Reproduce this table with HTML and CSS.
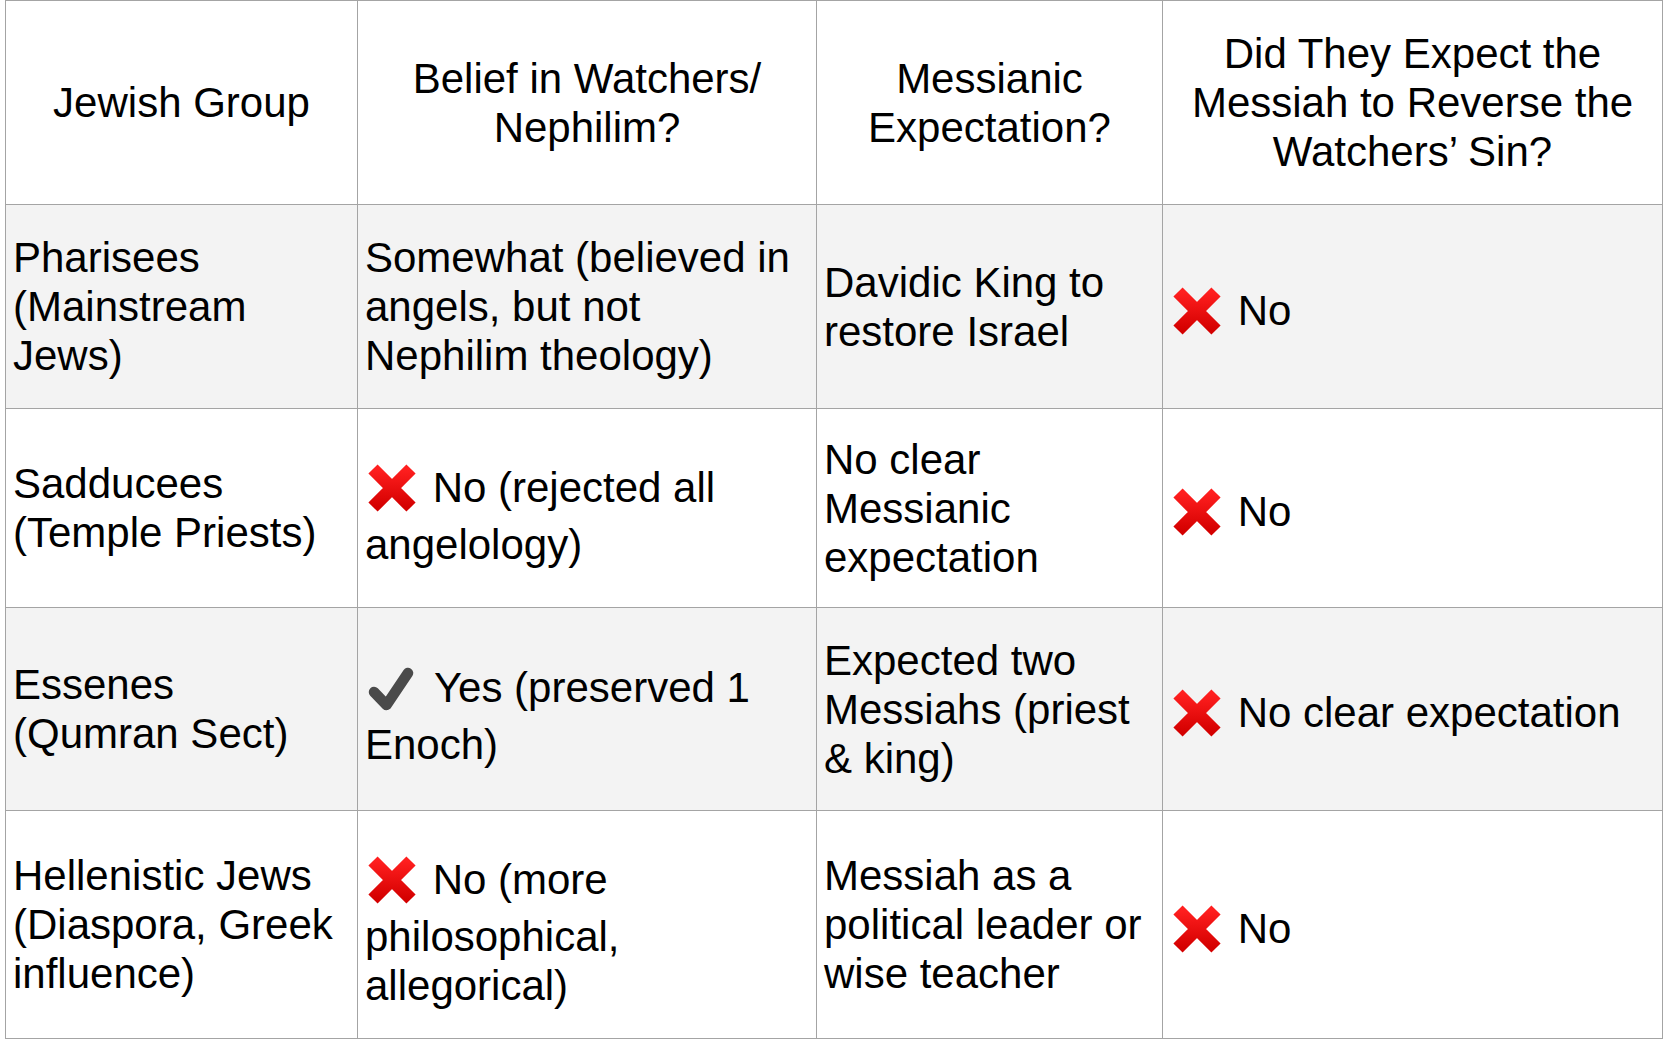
FILE: index.html
```html
<!DOCTYPE html>
<html lang="en">
<head>
<meta charset="utf-8">
<title>Jewish Groups and the Watchers</title>
<link rel="stylesheet" href="styles.css">
</head>
<body>
<svg width="0" height="0" class="defs" aria-hidden="true">
  <defs>
    <linearGradient id="redgrad" x1="0" y1="0" x2="0" y2="1">
      <stop offset="0" stop-color="#ff1f1f"/>
      <stop offset="1" stop-color="#d40000"/>
    </linearGradient>
    <symbol id="cross" viewBox="0 0 52 52">
      <path d="M7 7 L45 45 M45 7 L7 45" stroke="url(#redgrad)" stroke-width="13" stroke-linecap="butt" fill="none"/>
    </symbol>
    <symbol id="check" viewBox="0 0 47 46">
      <path d="M7 26 L19.5 39 L41 7" stroke="#4a4a4a" stroke-width="10.5" stroke-linecap="round" stroke-linejoin="round" fill="none"/>
    </symbol>
  </defs>
</svg>
<table class="grid">
  <colgroup>
    <col class="c1"><col class="c2"><col class="c3"><col class="c4">
  </colgroup>
  <thead>
    <tr class="r-head">
      <th>Jewish Group</th>
      <th>Belief in Watchers/<wbr>Nephilim?</th>
      <th>Messianic Expectation?</th>
      <th>Did They Expect the Messiah to Reverse the Watchers’ Sin?</th>
    </tr>
  </thead>
  <tbody>
    <tr class="r1 shade">
      <td>Pharisees (Mainstream Jews)</td>
      <td>Somewhat (believed in angels, but not Nephilim theology)</td>
      <td>Davidic King to restore Israel</td>
      <td><svg class="ico x"><use href="#cross"/></svg> No</td>
    </tr>
    <tr class="r2">
      <td>Sadducees (Temple Priests)</td>
      <td><svg class="ico x"><use href="#cross"/></svg> No (rejected all angelology)</td>
      <td>No clear Messianic expectation</td>
      <td><svg class="ico x"><use href="#cross"/></svg> No</td>
    </tr>
    <tr class="r3 shade">
      <td>Essenes (Qumran Sect)</td>
      <td><svg class="ico ck"><use href="#check"/></svg> Yes (preserved 1 Enoch)</td>
      <td>Expected two Messiahs (priest &amp; king)</td>
      <td><svg class="ico x"><use href="#cross"/></svg> No clear expectation</td>
    </tr>
    <tr class="r4">
      <td>Hellenistic Jews (Diaspora, Greek influence)</td>
      <td><svg class="ico x"><use href="#cross"/></svg> No (more philosophical, allegorical)</td>
      <td>Messiah as a political leader or wise teacher</td>
      <td><svg class="ico x"><use href="#cross"/></svg> No</td>
    </tr>
  </tbody>
</table>
</body>
</html>
```

FILE: styles.css
```css
html, body {
  margin: 0;
  padding: 0;
  background: #ffffff;
}

body {
  padding-left: 5px;
  font-family: "Liberation Sans", Arial, Helvetica, sans-serif;
  color: #000000;
}

.defs {
  position: absolute;
  width: 0;
  height: 0;
  overflow: hidden;
}

.grid {
  border-collapse: collapse;
  table-layout: fixed;
  width: 1657px;
  font-size: 42px;
  line-height: 49px;
}

.c1 { width: 352px; }
.c2 { width: 459px; }
.c3 { width: 346px; }
.c4 { width: 500px; }

.grid th,
.grid td {
  border: 1px solid #a4a4a4;
  padding: 0 11px 0 7px;
  vertical-align: middle;
  overflow: hidden;
}

.grid th {
  font-weight: normal;
  text-align: center;
  padding: 0 9px;
}

.grid td {
  text-align: left;
}

.shade td {
  background: #f3f3f3;
}

.r-head { height: 204px; }
.r1 { height: 204px; }
.r2 { height: 199px; }
.r3 { height: 203px; }
.r4 { height: 228px; }

.ico {
  display: inline-block;
  vertical-align: -18px;
  margin-top: 14px;
  margin-bottom: 6px;
}

.ico.x {
  width: 52px;
  height: 52px;
  margin-left: 1px;
  margin-right: 3px;
}

.ico.ck {
  width: 47px;
  height: 46px;
  margin-left: 2px;
  margin-right: 9px;
  margin-top: 16px;
  margin-bottom: 8px;
}
```
